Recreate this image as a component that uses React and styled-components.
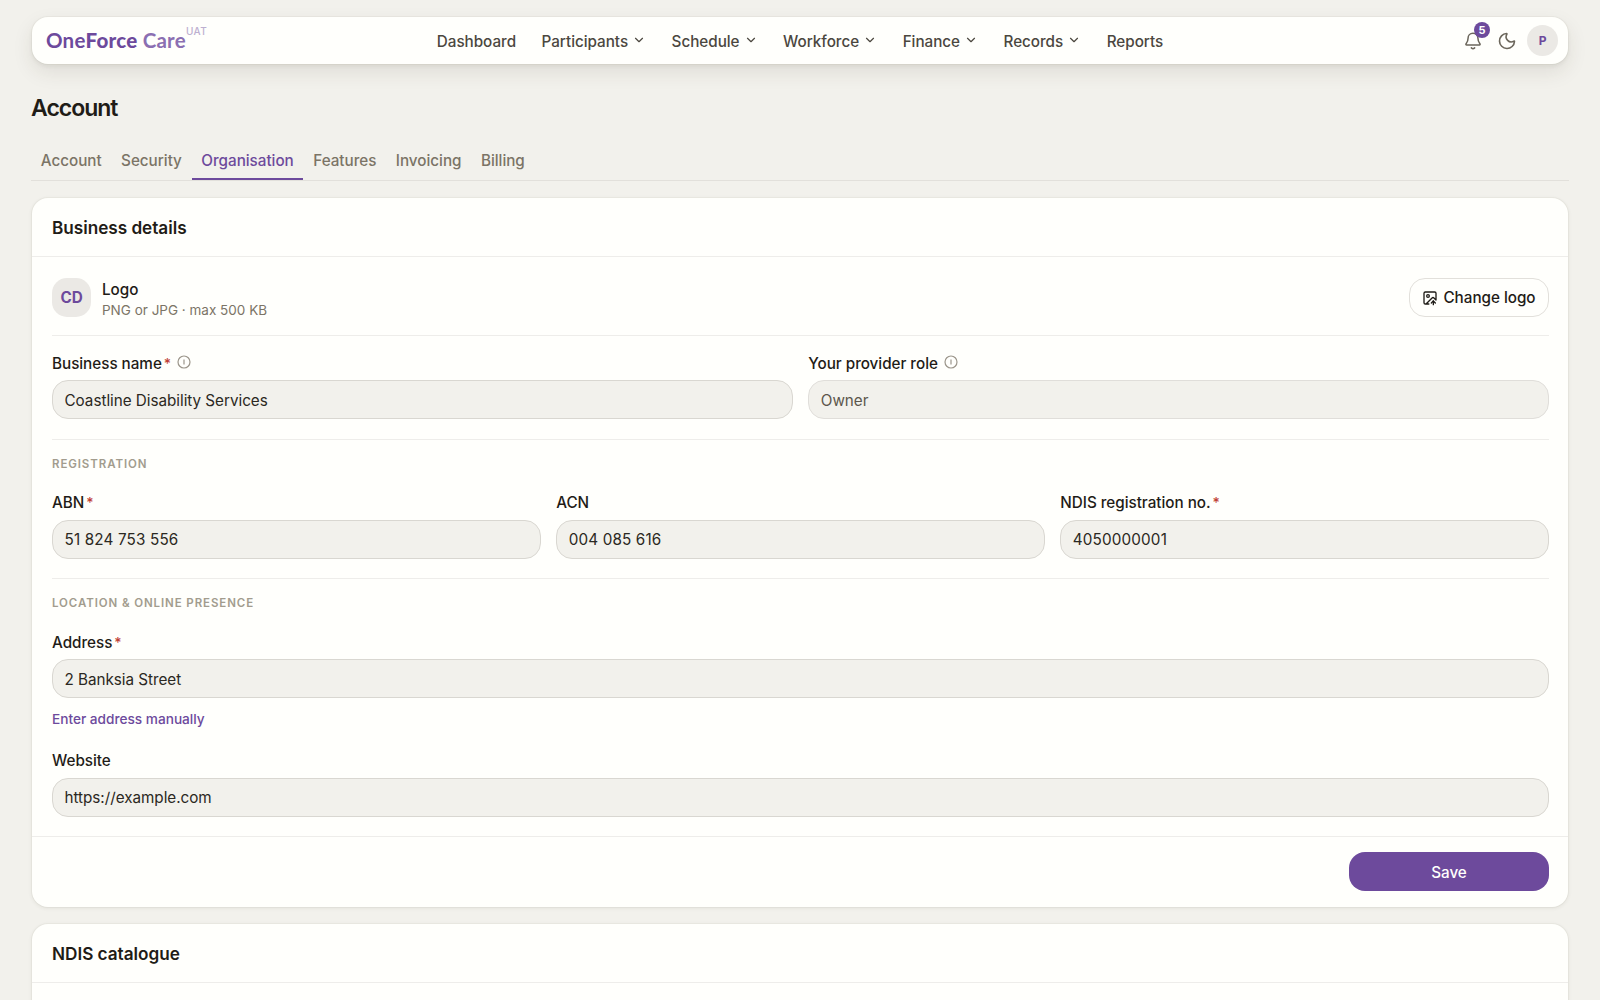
import { ChevronDown, ImageUp, Moon } from "lucide-react";
import React from "react";
import styled, { createGlobalStyle } from "styled-components";

const navItems = [
  { label: "Dashboard" },
  { label: "Participants", menu: true },
  { label: "Schedule", menu: true },
  { label: "Workforce", menu: true },
  { label: "Finance", menu: true },
  { label: "Records", menu: true },
  { label: "Reports" },
];

const tabs = ["Account", "Security", "Organisation", "Features", "Invoicing", "Billing"];

function BellIcon() {
  return (
    <svg
      width="18"
      height="18"
      viewBox="0 0 18 18"
      fill="none"
      stroke="currentColor"
      strokeWidth="1.5"
      strokeLinecap="round"
      strokeLinejoin="round"
    >
      <path d="M9 1.2C5.9 1.2 4.1 3.5 4.1 6.1c0 3.2-.9 4.3-2 5.6-.5.6-.2 1.3.5 1.3h12.8c.7 0 1-.7.5-1.3-1.1-1.3-2-2.4-2-5.6 0-2.6-1.8-4.9-4.9-4.9z" />
      <path d="M7.4 15.9c.9.9 2.3.9 3.2 0" />
    </svg>
  );
}

function InfoIcon() {
  return (
    <InfoSvg width="14" height="14" viewBox="0 0 14 14" fill="none" stroke="currentColor">
      <circle cx="7" cy="7" r="6" strokeWidth="1.2" />
      <path d="M7 4.6v4.8" strokeWidth="1.2" />
    </InfoSvg>
  );
}

function Field({ label, value, required, info, disabled, numeric }) {
  return (
    <FieldBox>
      <Label>
        {label}
        {required && <Star>*</Star>}
        {info && <InfoIcon />}
      </Label>
      <Input defaultValue={value} disabled={disabled} $numeric={numeric} />
    </FieldBox>
  );
}

export default function App() {
  return (
    <Page>
      <GlobalStyle />
      <Header>
        <Brand>
          <span>
            One<b>Force</b> <BrandSoft>Care</BrandSoft>
          </span>
          <Env>UAT</Env>
        </Brand>
        <Nav>
          {navItems.map((item) => (
            <NavItem key={item.label}>
              {item.label}
              {item.menu && <Chevron size={14} strokeWidth={2} />}
            </NavItem>
          ))}
        </Nav>
        <Actions>
          <BellButton>
            <BellIcon />
            <Badge>5</Badge>
          </BellButton>
          <IconButton>
            <Moon size={20} strokeWidth={1.9} />
          </IconButton>
          <Avatar>P</Avatar>
        </Actions>
      </Header>

      <Title>Account</Title>
      <Tabs>
        {tabs.map((tab) => (
          <Tab key={tab} $active={tab === "Organisation"}>
            {tab}
          </Tab>
        ))}
      </Tabs>

      <Card>
        <CardHeader>Business details</CardHeader>
        <CardBody>
          <LogoRow>
            <LogoTile>CD</LogoTile>
            <LogoText>
              <LogoTitle>Logo</LogoTitle>
              <LogoHint>PNG or JPG · max 500 KB</LogoHint>
            </LogoText>
            <OutlineButton>
              <ImageUp size={16} strokeWidth={2} />
              Change logo
            </OutlineButton>
          </LogoRow>

          <Section>
            <Grid $cols={2}>
              <Field label="Business name" value="Coastline Disability Services" required info />
              <Field label="Your provider role" value="Owner" info disabled />
            </Grid>
          </Section>

          <Section>
            <SectionTitle>Registration</SectionTitle>
            <Grid $cols={3}>
              <Field label="ABN" value="51 824 753 556" required numeric />
              <Field label="ACN" value="004 085 616" numeric />
              <Field label="NDIS registration no." value="4050000001" required numeric />
            </Grid>
          </Section>

          <Section>
            <SectionTitle>Location &amp; online presence</SectionTitle>
            <Field label="Address" value="2 Banksia Street" required />
            <LinkButton>Enter address manually</LinkButton>
            <Field label="Website" value="https://example.com" />
          </Section>
        </CardBody>
        <CardFooter>
          <SaveButton>Save</SaveButton>
        </CardFooter>
      </Card>

      <Card>
        <CardHeader>NDIS catalogue</CardHeader>
        <CardBody />
      </Card>
    </Page>
  );
}

const GlobalStyle = createGlobalStyle`
  * {
    box-sizing: border-box;
  }
  body {
    margin: 0;
    background: #f2f1ec;
    overflow: hidden;
  }
  button, input {
    font-family: inherit;
    letter-spacing: inherit;
  }
`;

const Page = styled.div`
  height: 1000px;
  overflow: hidden;
  padding: 17px 32px 0;
  background: #f2f1ec;
  color: #1f1c17;
  font-family: Inter, "Liberation Sans", sans-serif;
  font-size: 15.25px;
  letter-spacing: -0.03px;
`;

const Header = styled.header`
  display: grid;
  grid-template-columns: 1fr auto 1fr;
  align-items: center;
  height: 47px;
  padding: 0 10px;
  border-radius: 16px;
  background: #fffffc;
  box-shadow: 0 0 0 1px rgba(60, 50, 30, 0.03), 0 2px 4px rgba(60, 50, 30, 0.07),
    0 8px 20px rgba(60, 50, 30, 0.1);
`;

const Brand = styled.div`
  display: flex;
  align-items: center;
  padding-left: 4px;
  font-family: Lato, Inter, sans-serif;
  font-size: 20.5px;
  font-weight: 700;
  line-height: 27px;
  letter-spacing: 0.23px;
  color: #6d4a9c;
  b {
    font-weight: 900;
  }
`;

const BrandSoft = styled.span`
  color: #8b6fb2;
`;

const Env = styled.sup`
  align-self: flex-start;
  font-family: Inter, sans-serif;
  font-size: 10px;
  font-weight: 500;
  line-height: 8px;
  letter-spacing: 0.5px;
  color: #bdafd0;
`;

const Nav = styled.nav`
  display: flex;
  gap: 25.5px;
  padding-top: 2px;
`;

const NavItem = styled.a`
  display: flex;
  align-items: center;
  gap: 4px;
  font-weight: 500;
  line-height: 22px;
  color: #4b473f;
`;

const Chevron = styled(ChevronDown)`
  margin-bottom: 3px;
`;

const Actions = styled.div`
  display: flex;
  align-items: center;
  justify-content: flex-end;
`;

const IconButton = styled.span`
  display: flex;
  align-items: center;
  justify-content: center;
  width: 34px;
  height: 32px;
  color: #6b665b;
`;

const BellButton = styled(IconButton)`
  position: relative;
`;

const Badge = styled.span`
  position: absolute;
  top: -3px;
  right: 0;
  width: 16px;
  height: 16px;
  border-radius: 50%;
  background: #6d4a9c;
  color: #fff;
  font-size: 11px;
  font-weight: 700;
  line-height: 16px;
  text-align: center;
`;

const Avatar = styled.div`
  width: 31px;
  height: 31px;
  margin-left: 3px;
  border-radius: 50%;
  background: #ebe9e5;
  color: #6d4a9c;
  font-size: 12px;
  font-weight: 700;
  line-height: 31px;
  text-align: center;
`;

const Title = styled.h1`
  margin: 29px 0 0 -1px;
  font-size: 23px;
  font-weight: 600;
  line-height: 30px;
  letter-spacing: -1px;
`;

const Tabs = styled.div`
  display: flex;
  margin: 17px -1px;
  border-bottom: 1px solid #e2e0db;
`;

const Tab = styled.div`
  height: 40px;
  padding: 1px 9.75px 0;
  border-bottom: 2px solid ${(p) => (p.$active ? "#6d4a9c" : "transparent")};
  color: ${(p) => (p.$active ? "#6d4a9c" : "#7b7466")};
  font-weight: 500;
  line-height: 40px;
`;

const Card = styled.section`
  margin-bottom: 17px;
  border-radius: 16px;
  background: #fffffc;
  box-shadow: 0 0 0 1px rgba(60, 50, 30, 0.03), 0 1px 4px rgba(60, 50, 30, 0.09);
`;

const CardHeader = styled.h2`
  height: 59px;
  margin: 0;
  padding: 0 20px;
  border-bottom: 1px solid #eeedea;
  font-size: 17.2px;
  font-weight: 600;
  line-height: 59px;
`;

const CardBody = styled.div`
  min-height: 20px;
  padding: 21px 19px 19.5px 20px;
`;

const LogoRow = styled.div`
  display: flex;
  align-items: center;
  height: 39px;
  margin-bottom: 18px;
`;

const LogoTile = styled.div`
  width: 39px;
  height: 39px;
  border-radius: 15px;
  background: #ebe9e5;
  color: #6d4a9c;
  font-weight: 700;
  line-height: 40px;
  text-align: center;
`;

const LogoText = styled.div`
  flex: 1;
  margin-left: 11px;
  padding-top: 4px;
`;

const LogoTitle = styled.div`
  font-weight: 500;
  line-height: 22px;
`;

const LogoHint = styled.div`
  color: #7b7466;
  font-size: 13.5px;
  line-height: 19px;
  letter-spacing: 0;
`;

const OutlineButton = styled.button`
  display: flex;
  align-items: center;
  justify-content: center;
  gap: 5px;
  width: 140px;
  height: 39px;
  padding: 0;
  border: 1px solid #e2e0db;
  border-radius: 16px;
  background: #fffffc;
  color: #1f1c17;
  font-size: 15.25px;
  font-weight: 500;
`;

const Section = styled.div`
  padding-top: 16px;
  border-top: 1px solid #eeedea;
  & + & {
    margin-top: 19.5px;
  }
`;

const SectionTitle = styled.h3`
  margin: 0 0 20px;
  color: #a29c8e;
  font-size: 11.5px;
  font-weight: 600;
  line-height: 16px;
  letter-spacing: 0.9px;
  text-transform: uppercase;
`;

const Grid = styled.div`
  display: grid;
  grid-template-columns: repeat(${(p) => p.$cols}, 1fr);
  gap: 15.5px;
`;

const FieldBox = styled.label`
  display: block;
`;

const Label = styled.span`
  display: flex;
  align-items: center;
  height: 22px;
  margin-bottom: 6px;
  font-weight: 500;
`;

const Star = styled.span`
  margin-left: 2px;
  color: #bf4136;
  font-size: 14px;
`;

const InfoSvg = styled.svg`
  margin: 0 0 2px 6px;
  color: #9b958a;
`;

const Input = styled.input`
  display: block;
  width: 100%;
  height: 39px;
  padding: 1px 11.5px 0;
  border: 1px solid #d9d7d1;
  border-radius: 16px;
  background: #f2f1ec;
  color: #2b2822;
  font-size: 15.25px;
  letter-spacing: ${(p) => (p.$numeric ? "0.15px" : "-0.03px")};
  &:disabled {
    border-color: #e0deda;
    color: #5c574d;
  }
`;

const LinkButton = styled.button`
  display: block;
  margin: 11px 0 20.5px;
  padding: 0;
  border: none;
  background: none;
  color: #6d4a9c;
  font-size: 13.65px;
  font-weight: 500;
  line-height: 20px;
  letter-spacing: 0;
`;

const CardFooter = styled.div`
  display: flex;
  justify-content: flex-end;
  padding: 15px 19px 16px;
  border-top: 1px solid #eeedea;
`;

const SaveButton = styled.button`
  width: 200px;
  height: 39px;
  padding: 2px 0 0;
  border: none;
  border-radius: 16px;
  background: #6d4a9c;
  color: #fffffc;
  font-size: 15.25px;
  font-weight: 500;
`;
